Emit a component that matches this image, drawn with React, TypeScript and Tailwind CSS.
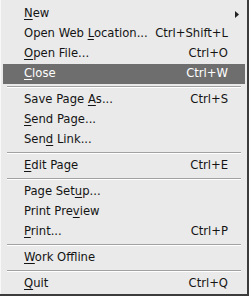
import React from "react";

type Item =
  | { type: "sep" }
  | { type: "item"; pre: string; u: string; post: string; sc?: string; sub?: boolean; active?: boolean };

const items: Item[] = [
  { type: "item", pre: "", u: "N", post: "ew", sub: true },
  { type: "item", pre: "Open Web ", u: "L", post: "ocation...", sc: "Ctrl+Shift+L" },
  { type: "item", pre: "", u: "O", post: "pen File...", sc: "Ctrl+O" },
  { type: "item", pre: "", u: "C", post: "lose", sc: "Ctrl+W", active: true },
  { type: "sep" },
  { type: "item", pre: "Save Page ", u: "A", post: "s...", sc: "Ctrl+S" },
  { type: "item", pre: "", u: "S", post: "end Page..." },
  { type: "item", pre: "Sen", u: "d", post: " Link..." },
  { type: "sep" },
  { type: "item", pre: "", u: "E", post: "dit Page", sc: "Ctrl+E" },
  { type: "sep" },
  { type: "item", pre: "Page Set", u: "u", post: "p..." },
  { type: "item", pre: "Print Pre", u: "v", post: "iew" },
  { type: "item", pre: "", u: "P", post: "rint...", sc: "Ctrl+P" },
  { type: "sep" },
  { type: "item", pre: "", u: "W", post: "ork Offline" },
  { type: "sep" },
  { type: "item", pre: "", u: "Q", post: "uit", sc: "Ctrl+Q" },
];

export default function App() {
  return (
    <div
      className="w-[249px] h-[296px] bg-[#eaeaea] border-r-2 border-b-2 border-r-[#3c3c3c] border-b-[#3c3c3c] overflow-hidden"
      style={{ fontFamily: '"DejaVu Sans", sans-serif' }}
    >
      <div className="pt-[4px] pl-[2px] pr-[2px] border-l border-l-[#f8f8f8]">
        {items.map((it, i) =>
          it.type === "sep" ? (
            <div key={i} className="h-[6px] flex flex-col justify-center px-[4px]">
              <div className="h-px bg-[#a2a2a2]" />
              <div className="h-px bg-[#ffffff]" />
            </div>
          ) : (
            <div
              key={i}
              className={
                "h-[20px] flex items-center pl-[21px] pr-[17px] text-[11.6px] leading-none " +
                (it.active ? "bg-[#6e6e6e] text-white" : "text-[#141414]")
              }
            >
              <span className="flex-1 whitespace-pre">
                {it.pre}
                <span className="underline underline-offset-2">{it.u}</span>
                {it.post}
              </span>
              {it.sc && <span className="whitespace-pre">{it.sc}</span>}
              {it.sub && (
                <svg width="5" height="7" viewBox="0 0 5 7" className="-mr-[12px]">
                  <path d="M0 0 L4 3.5 L0 7 Z" fill="#222" />
                </svg>
              )}
            </div>
          )
        )}
      </div>
    </div>
  );
}
